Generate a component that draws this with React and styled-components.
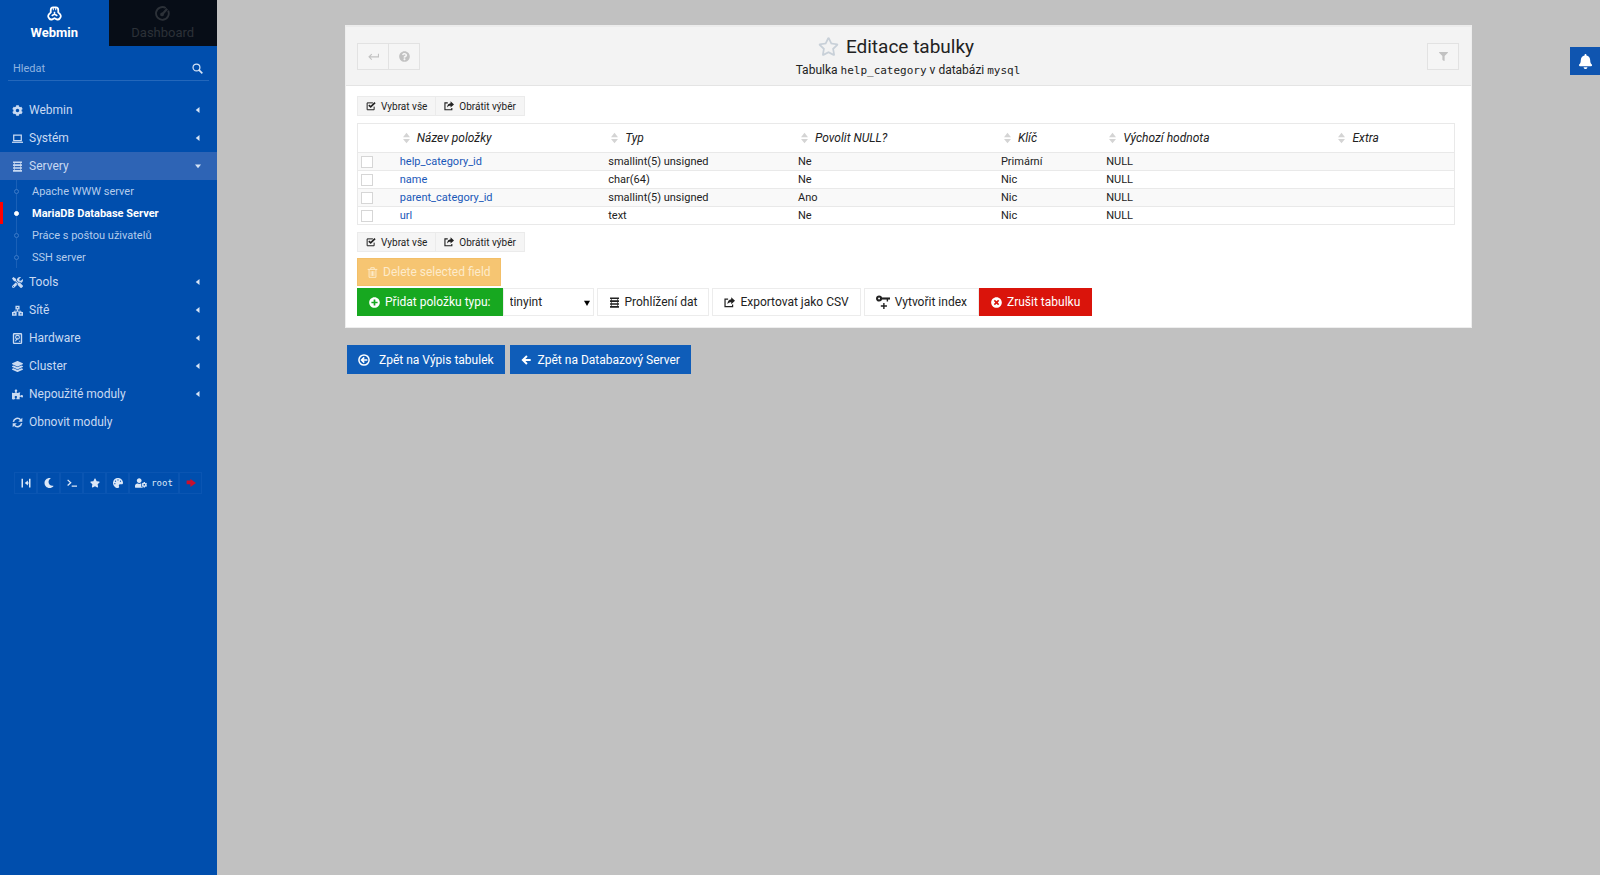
import React, { useState } from 'react';
import styled, { createGlobalStyle } from 'styled-components';
import { FaCog, FaTools, FaLayerGroup, FaPuzzlePiece, FaMoon, FaStar, FaPalette, FaUserCog, FaBell, FaFilter, FaQuestionCircle, FaPlusCircle, FaTimesCircle, FaRegStar } from 'react-icons/fa';

const menuTop = [
    { label: 'Webmin', icon: <FaCog /> },
    { label: 'Systém', icon: <LaptopIcon /> },
];

const serverLinks = ['Apache WWW server', 'MariaDB Database Server', 'Práce s poštou uživatelů', 'SSH server'];

const menuBottom = [
    { label: 'Tools', icon: <FaTools /> },
    { label: 'Sítě', icon: <NetworkIcon /> },
    { label: 'Hardware', icon: <DiskIcon /> },
    { label: 'Cluster', icon: <FaLayerGroup /> },
    { label: 'Nepoužité moduly', icon: <FaPuzzlePiece /> },
    { label: 'Obnovit moduly', icon: <RefreshIcon />, single: true },
];

const columns = [
    { title: 'Název položky', width: 19 },
    { title: 'Typ', width: 17.3 },
    { title: 'Povolit NULL?', width: 18.5 },
    { title: 'Klíč', width: 9.6 },
    { title: 'Výchozí hodnota', width: 20.9 },
    { title: 'Extra', width: 11.3 },
];

const fields = [
    ['help_category_id', 'smallint(5) unsigned', 'Ne', 'Primární', 'NULL', ''],
    ['name', 'char(64)', 'Ne', 'Nic', 'NULL', ''],
    ['parent_category_id', 'smallint(5) unsigned', 'Ano', 'Nic', 'NULL', ''],
    ['url', 'text', 'Ne', 'Nic', 'NULL', ''],
];

function App() {

    const [ selected, setSelected ] = useState([]);

    const selectAll = () => setSelected(fields.map((f) => f[0]));
    const invert = () => setSelected(fields.map((f) => f[0]).filter((n) => !selected.includes(n)));
    const toggle = (name) => {
        setSelected(selected.includes(name) ? selected.filter((n) => n !== name) : [...selected, name]);
    }

    return (
        <Page>
            <GlobalStyle />
            <Sidebar>
                <Tabs>
                    <Tab href="#webmin" $active><WebminIcon /><span>Webmin</span></Tab>
                    <Tab href="#dashboard"><GaugeIcon /><span>Dashboard</span></Tab>
                </Tabs>
                <Search>
                    <input type="text" placeholder="Hledat" aria-label="Hledat" />
                    <SearchIcon />
                </Search>
                <Menu>
                    {menuTop.map((item) => <MenuRow key={item.label} {...item} />)}
                    <MenuRow label="Servery" icon={<ServerIcon />} open />
                    <SubMenu>
                        {serverLinks.map((label, i) => (
                            <SubItem key={label} $active={i === 1}>
                                <a href="#module"><Dot $active={i === 1} />{label}</a>
                            </SubItem>
                        ))}
                    </SubMenu>
                    {menuBottom.map((item) => <MenuRow key={item.label} {...item} />)}
                </Menu>
                <Tools>
                    <ToolButton aria-label="Toggle menu"><CollapseIcon /></ToolButton>
                    <ToolButton aria-label="Night mode"><FaMoon /></ToolButton>
                    <ToolButton aria-label="Terminal"><PromptIcon /></ToolButton>
                    <ToolButton aria-label="Favorites"><FaStar /></ToolButton>
                    <ToolButton aria-label="Theme"><FaPalette /></ToolButton>
                    <ToolButton $wide><FaUserCog />root</ToolButton>
                    <ToolButton aria-label="Logout" $danger><LogoutIcon /></ToolButton>
                </Tools>
            </Sidebar>

            <Main>
                <Panel>
                    <PanelHeader>
                        <HeaderButtons>
                            <HeaderButton aria-label="Back"><ReturnIcon /></HeaderButton>
                            <HeaderButton aria-label="Help"><FaQuestionCircle /></HeaderButton>
                        </HeaderButtons>
                        <Heading>
                            <h1><FaRegStar />Editace tabulky</h1>
                            <p>Tabulka <code>help_category</code> v databázi <code>mysql</code></p>
                        </Heading>
                        <HeaderButtons $end>
                            <HeaderButton aria-label="Filter" $small><FaFilter /></HeaderButton>
                        </HeaderButtons>
                    </PanelHeader>
                    <PanelBody>
                        <SelectButtons onAll={selectAll} onInvert={invert} />
                        <Table>
                            <colgroup>
                                <Col $width={3.4} />
                                {columns.map((c) => <Col key={c.title} $width={c.width} />)}
                            </colgroup>
                            <thead>
                                <tr>
                                    <th />
                                    {columns.map((c) => <th key={c.title}><SortIcon />{c.title}</th>)}
                                </tr>
                            </thead>
                            <tbody>
                                {fields.map(([name, ...rest]) => (
                                    <tr key={name}>
                                        <td><Check type="checkbox" aria-label={name} checked={selected.includes(name)} onChange={() => toggle(name)} /></td>
                                        <td><a href="#field">{name}</a></td>
                                        {rest.map((value, i) => <td key={i}>{value}</td>)}
                                    </tr>
                                ))}
                            </tbody>
                        </Table>
                        <SelectButtons onAll={selectAll} onInvert={invert} />
                        <DeleteButton disabled={!selected.length}><TrashIcon />Delete selected field</DeleteButton>
                        <Actions>
                            <ButtonGroup>
                                <AddButton><FaPlusCircle />Přidat položku typu:</AddButton>
                                <TypeSelect>
                                    <select aria-label="Přidat položku typu" defaultValue="tinyint">
                                        <option>tinyint</option>
                                        <option>char</option>
                                        <option>text</option>
                                    </select>
                                    <Caret viewBox="0 0 8 8"><path d="M0 1h8L4 8z" /></Caret>
                                </TypeSelect>
                            </ButtonGroup>
                            <Button><ServerIcon />Prohlížení dat</Button>
                            <Button><ShareIcon />Exportovat jako CSV</Button>
                            <ButtonGroup>
                                <KeyButton><KeyIcon />Vytvořit index</KeyButton>
                                <DropButton><FaTimesCircle />Zrušit tabulku</DropButton>
                            </ButtonGroup>
                        </Actions>
                    </PanelBody>
                </Panel>
                <BackLinks>
                    <BackLink href="#tables"><CircleLeftIcon />Zpět na Výpis tabulek</BackLink>
                    <BackLink href="#server" $tight><ArrowLeftIcon />Zpět na Databazový Server</BackLink>
                </BackLinks>
            </Main>
            <Bell aria-label="Notifications"><FaBell /></Bell>
        </Page>
    )
}

export default App;

function MenuRow({ label, icon, open, single }) {
    return (
        <MenuLink href="#menu" $open={open}>
            {icon}
            <span>{label}</span>
            {!single && <Arrow viewBox="0 0 8 8"><path d={open ? 'M0 2h8L4 7z' : 'M6 0v8L1 4z'} /></Arrow>}
        </MenuLink>
    )
}

function SelectButtons({ onAll, onInvert }) {
    return (
        <SmallGroup>
            <SmallButton onClick={onAll}><CheckSquareIcon />Vybrat vše</SmallButton>
            <SmallButton onClick={onInvert}><ShareIcon />Obrátit výběr</SmallButton>
        </SmallGroup>
    )
}

// icons
function Line({ children, width = 2 }) {
    return (
        <svg width="1em" height="1em" viewBox="0 0 16 16" fill="none" stroke="currentColor" strokeWidth={width}>{children}</svg>
    )
}

function WebminIcon() {
    return (
        <Line width={1.9}>
            <path d="M4 6.800V4.300Q4 1.500 6.500 1.500h3Q12 1.500 12 4.300v2.500l1.600 1.500q1.700 1.800.8 3.700l-.7 1.200q-1.200 1.700-3.400 1L8 13l-2.300 1.200q-2.200.7-3.400-1L1.600 12q-.9-1.900.8-3.700z" />
            <path d="M8 8.500V6M8 8.500l-3 2M8 8.500l3 2" strokeWidth="1.700" />
            <path d="M6.700 1.500v3M9.300 1.500v3" strokeWidth="1.100" />
        </Line>
    )
}

function GaugeIcon() {
    return <Line width={2}><path d="M11.5 2.200A6.800 6.800 0 1 0 14 5" /><path d="M7 9.500 13 3" strokeWidth="2.400" /><circle cx="7.500" cy="9" r="1" /></Line>
}

function SearchIcon() {
    return <Line width={1.8}><circle cx="6.500" cy="6.500" r="5" /><path d="m10 10 5 5" strokeWidth="2.400" /></Line>
}

function LaptopIcon() {
    return <Line width={1.8}><path d="M2.500 3h11v8h-11z" /><path d="M0 13.500h16" /></Line>
}

function ServerIcon() {
    return (
        <Line width={2.5}>
            <path d="M1.500 1.800h13M1.500 6h13M1.500 10.200h13M1.500 14.400h13" />
            <path d="M3.500 2v12M12.500 2v12" strokeWidth="1" />
        </Line>
    )
}

function NetworkIcon() {
    return (
        <Line width={1.4}>
            <path d="M8 6v3M3 11V9h10v2" />
            <path d="M5 1h6v5.500H5zM0 10h6.700v5.500H0zM9.300 10H16v5.500H9.300z" fill="currentColor" stroke="none" />
            <path d="M7 3.800h2M2 12.800h2.500M11.500 12.800H14" stroke="#004ead" />
        </Line>
    )
}

function DiskIcon() {
    return <Line><rect x="2.200" y="1" width="11.600" height="14" rx="1" /><circle cx="8" cy="6.300" r="2.800" strokeWidth="1.600" /><path d="m8 7-3 5M10 12h2" strokeWidth="1.600" /></Line>
}

function RefreshIcon() {
    return (
        <Line width={2.2}>
            <path d="M2 7a6 6 0 0 1 10.500-3M14 9a6 6 0 0 1-10.500 3" />
            <path d="M15 1v6H9zM1 15V9h6z" fill="currentColor" stroke="none" />
        </Line>
    )
}

function CollapseIcon() {
    return <Line width={2.4}><path d="M2 1v14M14 1v14M12 8H8" /><path d="M6 8l5-4v8z" fill="currentColor" stroke="none" /></Line>
}

function PromptIcon() {
    return <Line><path d="m1 3 5 4.500L1 12M7.500 13H16" /></Line>
}

function LogoutIcon() {
    return <Line width={6}><path d="M1 7h9" /><path d="M7 1.500 16 8l-9 6.500z" fill="currentColor" stroke="none" /></Line>
}

function ReturnIcon() {
    return <Line width={1.6}><path d="M15.200 4v4.500H1.500M5.500 4.500l-4 4 4 4" /></Line>
}

function ArrowLeftIcon() {
    return <Line width={3.2}><path d="M15.500 8H3M9.500 1.700 3 8l6.500 6.300" /></Line>
}

function ShareIcon() {
    return (
        <Line width={1.8}>
            <path d="M6 3H1.500v11h11v-3" />
            <path d="M10.500.5 16 5.500l-5.500 5V7.500C8 7.500 6.500 8 5 10.500c0-4 2-6.900 5.500-7.100z" fill="currentColor" stroke="none" />
        </Line>
    )
}

function CheckSquareIcon() {
    return <Line width={1.6}><path d="M13 9v5H1.800V3H11" /><path d="m4.500 6.500 3 3 7-7" strokeWidth="2.600" /></Line>
}

function TrashIcon() {
    return <Line width={1.4}><path d="M1 3.500h14M5.500 3V1h5v2M3 4v11h10V4M6 6v7M8 6v7M10 6v7" /></Line>
}

function KeyIcon() {
    return <Line width={2.4}><circle cx="3.500" cy="4" r="2.300" /><path d="M6 4h10" /><path d="M13 4v3.500M9 9v7M5.500 12.500h7" strokeWidth="1.600" /></Line>
}

function CircleLeftIcon() {
    return <Line><circle cx="8" cy="8" r="6.800" /><path d="M12.500 8H5M8.300 4.500 4.800 8l3.500 3.500" strokeWidth="2.200" /></Line>
}

function SortIcon() {
    return <svg width="7" height="12" viewBox="0 0 8 12" fill="#d4d4d4"><path d="M4 0l4 5H0zM4 12l4-5H0z" /></svg>
}

const GlobalStyle = createGlobalStyle`
    *{
        box-sizing: border-box;
    }

    body{
        margin: 0;
        background: #c1c1c1;
        color: #222;
        font-family: Roboto, "Liberation Sans", sans-serif;
        font-size: 12px;
    }

    button, input, select{
        font: inherit;
        color: inherit;
    }

    a{
        text-decoration: none;
    }
`

const Page = styled.div`
    display: flex;
    min-height: 100vh;
`

const Sidebar = styled.aside`
    flex: none;
    width: 217px;
    background: #004ead;
    color: #d5e3f5;
`

const Tabs = styled.nav`
    display: flex;
`

const Tab = styled.a`
    flex: 1;
    height: 46px;
    display: flex;
    flex-direction: column;
    align-items: center;
    padding-top: 6px;
    gap: 4px;
    font-size: 13px;
    line-height: 16px;
    font-weight: ${(p) => (p.$active ? 700 : 400)};
    color: ${(p) => (p.$active ? '#fff' : '#2c3138')};
    background: ${(p) => (p.$active ? 'transparent' : '#070d17')};

    svg{
        width: 15px;
        height: 15px;
    }
`

const Search = styled.label`
    display: flex;
    align-items: center;
    height: 24px;
    margin: 11px 8px 0;
    padding: 0 6px 0 5px;
    border-bottom: 1px solid #2367bb;

    input{
        flex: 1;
        min-width: 0;
        padding: 0;
        border: none;
        outline: none;
        background: none;
        font-size: 11px;
    }

    input::placeholder{
        color: #8fb3e0;
    }

    svg{
        width: 11px;
        height: 11px;
    }
`

const Menu = styled.nav`
    padding-top: 15px;
`

const MenuLink = styled.a`
    display: flex;
    align-items: center;
    height: 28px;
    padding: 0 16px 0 12px;
    gap: 6px;
    color: #c9daf2;
    background: ${(p) => (p.$open ? '#2e64b5' : 'none')};

    svg{
        width: 11px;
        height: 11px;
    }

    span{
        flex: 1;
    }
`

const Arrow = styled.svg`
    fill: #d5e3f5;

    ${MenuLink} &{
        width: 6px;
        height: 6px;
    }
`

const SubMenu = styled.ul`
    list-style: none;
    margin: 0;
    padding: 0;
    background: linear-gradient(#1a60b7, #1a60b7) 16px 0 / 1px 100% no-repeat;
`

const SubItem = styled.li`
    border-left: 3px solid ${(p) => (p.$active ? '#f00' : 'transparent')};

    a{
        display: flex;
        align-items: center;
        height: 22px;
        padding-left: 11px;
        gap: 13px;
        font-size: 11px;
        font-weight: ${(p) => (p.$active ? 700 : 400)};
        color: ${(p) => (p.$active ? '#fff' : '#b4ccec')};
    }
`

const Dot = styled.span`
    width: 5px;
    height: 5px;
    border-radius: 50%;
    border: 1px solid ${(p) => (p.$active ? '#fff' : '#3c7ac8')};
    background: ${(p) => (p.$active ? '#fff' : '#004ead')};
`

const Tools = styled.div`
    display: flex;
    margin: 36px 15px 0 14px;
`

const ToolButton = styled.button`
    flex: ${(p) => (p.$wide ? '1' : '0 0 23px')};
    display: flex;
    align-items: center;
    justify-content: center;
    gap: 4px;
    height: 22px;
    padding: 0;
    background: none;
    border: 1px solid #0a55b2;
    color: ${(p) => (p.$danger ? '#c8102e' : '#dbe7f7')};
    font-family: "DejaVu Sans Mono", monospace;
    font-size: 9px;
    cursor: pointer;

    svg{
        width: ${(p) => (p.$wide ? '12px' : '10px')};
        height: 10px;
    }
`

const Main = styled.main`
    flex: 1;
    min-width: 0;
    padding: 25px 128px 0;
`

const Panel = styled.section`
    background: #fff;
    border: 1px solid #eee;
    border-top: 2px solid #ececec;
`

const PanelHeader = styled.header`
    display: grid;
    grid-template-columns: 1fr auto 1fr;
    align-items: center;
    height: 59px;
    padding: 0 12px 0 11px;
    background: #f3f3f3;
    border-bottom: 1px solid #e4e4e4;
`

const HeaderButtons = styled.div`
    display: flex;
    justify-content: ${(p) => (p.$end ? 'flex-end' : 'flex-start')};
`

const HeaderButton = styled.button`
    display: flex;
    align-items: center;
    justify-content: center;
    width: 32px;
    height: 27px;
    padding: 0;
    background: #f5f5f5;
    border: 1px solid #e2e2e2;
    color: #c2c2c2;
    cursor: pointer;

    & + &{
        margin-left: -1px;
    }

    svg{
        width: ${(p) => (p.$small ? '9px' : '11px')};
        height: 11px;
    }
`

const Heading = styled.div`
    padding-top: 2px;
    text-align: center;

    h1{
        display: flex;
        align-items: center;
        justify-content: center;
        gap: 7px;
        margin: 0;
        padding-right: 24px;
        font-size: 19px;
        line-height: 26px;
        font-weight: 400;
    }

    h1 svg{
        width: 21px;
        height: 21px;
        color: #c8d0d8;
    }

    p{
        margin: 0;
        line-height: 20px;
    }

    code{
        font-family: "DejaVu Sans Mono", monospace;
        font-size: 11px;
    }
`

const PanelBody = styled.div`
    display: flex;
    flex-direction: column;
    align-items: flex-start;
    padding: 10px 16px 11px 11px;
`

const SmallGroup = styled.div`
    display: flex;
`

const SmallButton = styled.button`
    display: flex;
    align-items: center;
    gap: 5px;
    height: 20px;
    padding: 0 8px;
    background: #f5f5f5;
    border: 1px solid #ebebeb;
    font-size: 10px;
    cursor: pointer;

    & + &{
        margin-left: -1px;
    }

    svg{
        width: 10px;
        height: 10px;
    }
`

const Table = styled.table`
    width: 100%;
    margin: 7px 0;
    table-layout: fixed;
    border-collapse: collapse;
    border: 1px solid #e9e9e9;

    th{
        height: 29px;
        padding: 0 0 0 8px;
        text-align: left;
        font-style: italic;
        font-weight: 400;
    }

    th svg{
        margin-right: 7px;
        vertical-align: -2px;
    }

    td{
        height: 18px;
        padding: 0 5px;
        font-size: 11px;
        line-height: 17px;
        border-top: 1px solid #e9e9e9;
    }

    td:first-child{
        padding-left: 3px;
    }

    tbody tr:nth-child(odd){
        background: #f9f9f9;
    }

    a{
        color: #1a58b8;
    }
`

const Col = styled.col`
    width: ${(p) => p.$width}%;
`

const Check = styled.input`
    appearance: none;
    display: block;
    width: 12px;
    height: 12px;
    margin: 0;
    background: #fff;
    border: 1px solid #d6d6d6;

    &:checked{
        background: #0f5db9;
    }
`

const Button = styled.button`
    display: flex;
    align-items: center;
    gap: 5px;
    height: 28px;
    padding: 0 11px;
    background: #fff;
    border: 1px solid #ececec;
    white-space: nowrap;
    cursor: pointer;

    svg{
        width: 11px;
        height: 11px;
    }
`

const DeleteButton = styled(Button)`
    margin: 6px 0 2px;
    padding: 0 9px;
    background: #f6c572;
    border-color: #f3bf68;
    color: #fdebcb;
`

const AddButton = styled(Button)`
    background: #17a820;
    border-color: #17a820;
    color: #fff;
`

const KeyButton = styled(Button)`
    svg{
        width: 14px;
        height: 14px;
    }
`

const DropButton = styled(Button)`
    background: #da140b;
    border-color: #da140b;
    color: #fff;
`

const Actions = styled.div`
    display: flex;
    flex-wrap: wrap;
    gap: 3px;
`

const ButtonGroup = styled.div`
    display: flex;
`

const TypeSelect = styled.div`
    position: relative;

    select{
        appearance: none;
        width: 91px;
        height: 28px;
        padding: 0 6px;
        background: #fff;
        border: 1px solid #ececec;
        border-radius: 0;
    }
`

const Caret = styled.svg`
    position: absolute;
    right: 4px;
    top: 12px;
    width: 6px;
    height: 6px;
    pointer-events: none;
`

const BackLinks = styled.div`
    display: flex;
    gap: 5px;
    margin: 17px 0 0 2px;
`

const BackLink = styled.a`
    display: flex;
    align-items: center;
    gap: ${(p) => (p.$tight ? '7px' : '9px')};
    height: 29px;
    padding: 0 11px;
    background: #0f5db9;
    color: #fff;

    svg{
        width: ${(p) => (p.$tight ? '10px' : '12px')};
        height: 12px;
    }
`

const Bell = styled.button`
    position: fixed;
    top: 47px;
    right: 0;
    display: flex;
    align-items: center;
    justify-content: center;
    width: 30px;
    height: 28px;
    padding: 0;
    background: #0f55b0;
    border: none;
    color: #fff;
    cursor: pointer;

    svg{
        width: 15px;
        height: 15px;
    }
`
